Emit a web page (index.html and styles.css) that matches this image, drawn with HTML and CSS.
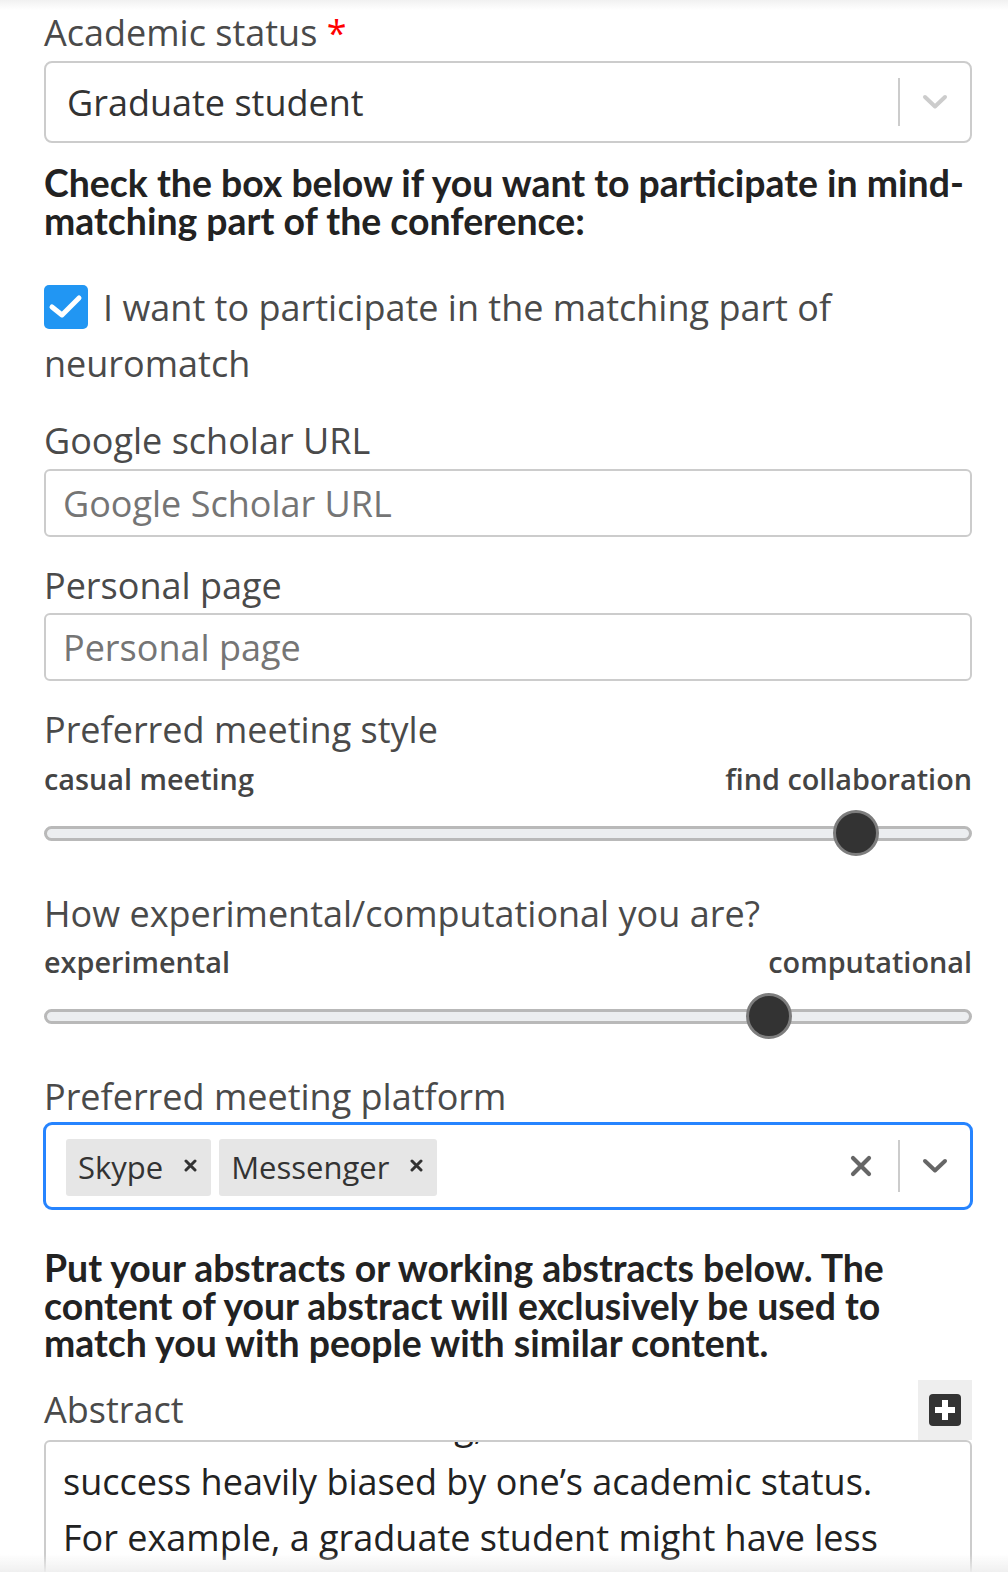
FILE: index.html
```html
<!DOCTYPE html>
<html lang="en">
<head>
<meta charset="utf-8">
<link rel="stylesheet" href="styles.css">
</head>
<body>
<div class="form">
  <label class="label first">Academic status <span class="req">*</span></label>
  <div class="select">
    <div class="select-value">Graduate student</div>
    <div class="indicators">
      <span class="sep"></span>
      <span class="ind">
        <svg width="26" height="16" viewBox="0 0 26 16"><path d="M3 3 L13 12.5 L23 3" fill="none" stroke="#cccccc" stroke-width="4" stroke-linecap="round" stroke-linejoin="round"/></svg>
      </span>
    </div>
  </div>

  <p class="note first-note">Check the box below if you want to participate in mind-matching part of the conference:</p>

  <div class="check-row">
    <span class="checkbox">
      <svg width="44" height="44" viewBox="0 0 44 44"><path d="M8 22 L18 30 L35 13" fill="none" stroke="#fff" stroke-width="5" stroke-linecap="round" stroke-linejoin="round"/></svg>
    </span>I want to participate in the matching part of neuromatch
  </div>

  <label class="label gap-l">Google scholar URL</label>
  <div class="input"><span class="ph">Google Scholar URL</span></div>

  <label class="label gap-l">Personal page</label>
  <div class="input input2"><span class="ph">Personal page</span></div>

  <label class="label gap-l">Preferred meeting style</label>
  <div class="range-labels"><span>casual meeting</span><span>find collaboration</span></div>
  <div class="slider"><div class="track"></div><div class="thumb" style="left: 87.5%"></div></div>

  <label class="label gap-xl">How experimental/computational you are?</label>
  <div class="range-labels r2"><span>experimental</span><span>computational</span></div>
  <div class="slider"><div class="track"></div><div class="thumb" style="left: 78.1%"></div></div>

  <label class="label gap-xl">Preferred meeting platform</label>
  <div class="multi">
    <div class="tags">
      <span class="tag"><span class="tag-text">Skype</span><svg class="tag-x" width="13" height="13" viewBox="0 0 13 13"><path d="M2 2 L11 11 M11 2 L2 11" stroke="#333" stroke-width="3" stroke-linecap="round"/></svg></span>
      <span class="tag"><span class="tag-text">Messenger</span><svg class="tag-x" width="13" height="13" viewBox="0 0 13 13"><path d="M2 2 L11 11 M11 2 L2 11" stroke="#333" stroke-width="3" stroke-linecap="round"/></svg></span>
    </div>
    <div class="indicators">
      <span class="ind clear">
        <svg width="22" height="22" viewBox="0 0 22 22"><path d="M3 3 L19 19 M19 3 L3 19" fill="none" stroke="#666" stroke-width="4.2" stroke-linecap="round"/></svg>
      </span>
      <span class="sep"></span>
      <span class="ind">
        <svg width="26" height="16" viewBox="0 0 26 16"><path d="M3 3 L13 12.5 L23 3" fill="none" stroke="#666" stroke-width="4" stroke-linecap="round" stroke-linejoin="round"/></svg>
      </span>
    </div>
  </div>

  <p class="note second-note">Put your abstracts or working abstracts below. The content of your abstract will exclusively be used to match you with people with similar content.</p>

  <div class="abstract-head">
    <label class="label">Abstract</label>
    <span class="plus-btn">
      <svg width="32" height="32" viewBox="0 0 32 32"><rect x="0" y="0" width="32" height="32" rx="4" fill="#333"/><path d="M16 6 V26 M6 16 H26" stroke="#fff" stroke-width="6"/></svg>
    </span>
  </div>
  <div class="textarea">
    <div class="ta-text">Academic co-networking,</div>
    <div class="ta-text">success heavily biased by one’s academic status.</div>
    <div class="ta-text">For example, a graduate student might have less</div>
    <div class="ta-text">opportunity to meet senior researchers.</div>
  </div>
</div>
<div class="bottom-fade"></div>
</body>
</html>
```

FILE: styles.css
```css
* { box-sizing: border-box; }
html, body { margin: 0; padding: 0; }
body {
  font-family: "Open Sans", "Liberation Sans", sans-serif;
  color: #444;
  height: 1572px;
  overflow: hidden;
  background: linear-gradient(to bottom, #f1f1f1 0, #ffffff 10px) no-repeat, #fff;
}
.form {
  padding: 11px 36px 0 44px;
}
.label {
  display: block;
  font-size: 36px;
  line-height: 44px;
  color: #4a4a4a;
}
.req { color: #ff0000; }
.gap-l { margin-top: 27px; }
.gap-xl { margin-top: 36px; }

.select {
  margin-top: 6px;
  height: 82px;
  border: 2px solid #cccccc;
  border-radius: 8px;
  display: flex;
  align-items: center;
  padding-left: 21px;
  background: #fff;
}
.select-value {
  flex: 1;
  font-size: 36px;
  color: #333;
}
.indicators {
  display: flex;
  align-items: center;
  align-self: stretch;
  padding: 15px 0;
}
.sep {
  width: 2px;
  align-self: stretch;
  background: #cccccc;
}
.ind {
  width: 70px;
  display: flex;
  justify-content: center;
  align-items: center;
}
.ind.clear { width: 74px; }

.note {
  margin: 0;
  font-family: "Lato", "Liberation Sans", sans-serif;
  font-weight: 700;
  font-size: 37.4px;
  line-height: 38px;
  color: #222;
}
.first-note { margin-top: 21px; }
.second-note { margin-top: 39px; line-height: 37.5px; }

.check-row {
  margin-top: 40px;
  font-size: 36px;
  line-height: 56px;
  color: #4a4a4a;
}
.checkbox {
  display: inline-flex;
  align-items: center;
  justify-content: center;
  width: 44px;
  height: 44px;
  background: #2196f3;
  border-radius: 5px;
  vertical-align: -8px;
  margin-right: 15px;
}

.input {
  margin-top: 6px;
  height: 68px;
  border: 2px solid #cccccc;
  border-radius: 6px;
  display: flex;
  align-items: center;
  padding-left: 17px;
}
.input2 { margin-top: 5px; }
.ph {
  font-size: 36px;
  color: #757575;
}

.range-labels {
  margin-top: 9px;
  display: flex;
  justify-content: space-between;
  font-size: 28.8px;
  line-height: 36px;
  font-weight: 600;
  color: #444;
}
.range-labels.r2 { margin-top: 8px; }
.slider {
  margin-top: 13px;
  height: 46px;
  position: relative;
  display: flex;
  align-items: center;
}
.track {
  flex: 1;
  height: 15px;
  border: 3px solid #b9b9b9;
  background: #eceef0;
  border-radius: 8px;
}
.thumb {
  position: absolute;
  top: 0;
  width: 46px;
  height: 46px;
  margin-left: -23px;
  border-radius: 50%;
  background: #333;
  border: 3px solid #7d7d7d;
}

.multi {
  margin-top: 3px;
  margin-left: -1px;
  margin-right: -1px;
  height: 88px;
  border: 3px solid #2684ff;
  border-radius: 9px;
  display: flex;
  align-items: center;
  padding-left: 20px;
}
.tags {
  flex: 1;
  display: flex;
  gap: 8px;
  padding-top: 2px;
}
.tag {
  display: inline-flex;
  align-items: center;
  height: 57px;
  background: #e6e6e6;
  border-radius: 3px;
  padding-left: 12px;
  padding-right: 14px;
}
.tag-text {
  font-size: 31px;
  color: #333;
}
.tag-x {
  margin-left: 21px;
  margin-top: -4px;
}

.abstract-head {
  margin-top: 18px;
  height: 60px;
  display: flex;
  align-items: center;
  justify-content: space-between;
}
.plus-btn {
  width: 54px;
  height: 60px;
  background: #eeeeee;
  display: flex;
  align-items: center;
  justify-content: center;
}
.textarea {
  height: 200px;
  border: 2px solid #cccccc;
  border-radius: 6px;
  overflow: hidden;
  padding-left: 17px;
  background: #fff;
}
.ta-text {
  font-size: 36px;
  line-height: 56px;
  color: #222;
  white-space: nowrap;
}
.ta-text:first-child { margin-top: -44px; }

.bottom-fade {
  position: fixed;
  left: 0;
  right: 0;
  bottom: 0;
  height: 18px;
  background: linear-gradient(to bottom, rgba(240,240,240,0), rgba(238,238,238,0.9));
  pointer-events: none;
}
```
